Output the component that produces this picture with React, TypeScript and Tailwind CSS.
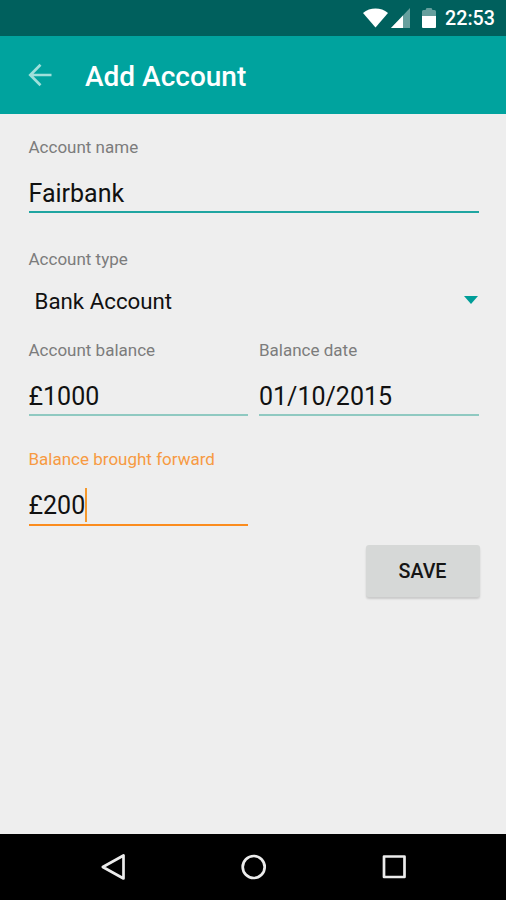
import { ReactNode } from 'react';

type FieldProps = {
  label: string;
  value: string;
  underline: string;
  labelColor?: string;
  children?: ReactNode;
};

function Field({ label, value, underline, labelColor = 'text-[#7c7c7c]', children }: FieldProps) {
  return (
    <div>
      <div className={`h-5 text-[17px] leading-5 ${labelColor}`}>{label}</div>
      <div className="mt-[18px] flex h-9 items-center text-[25px] leading-none text-[#111111]">
        <span className="pt-[1px]">{value}</span>
        {children}
      </div>
      <div className={underline} />
    </div>
  );
}

function StatusBar() {
  return (
    <div className="flex h-9 shrink-0 items-center justify-end bg-[#00605d] pr-[11px] text-white">
      <svg width="25" height="20" viewBox="0 0 25 20" fill="currentColor">
        <path d="M0 5C7-.9 18-.9 25 5L12.500 19.500Z" />
      </svg>
      <svg className="ml-[3px]" width="19" height="20" viewBox="0 0 19 20" fill="currentColor">
        <path d="M0 20 19 0v20Z" opacity=".4" />
        <path d="M0 20 12 7.400v12.600Z" />
      </svg>
      <svg className="ml-[12px]" width="14" height="20" viewBox="0 0 14 20" fill="currentColor">
        <path d="M0 8V3.500Q0 2 1.500 2H3.500L4.500 0h5l1 2h2Q14 2 14 3.500V8Z" opacity=".4" />
        <path d="M0 8h14v11q0 1-1 1H1q-1 0-1-1Z" />
      </svg>
      <span className="ml-[9px] pt-[2px] text-[19.7px] font-medium leading-none">22:53</span>
    </div>
  );
}

function Toolbar() {
  return (
    <div className="flex h-[78px] shrink-0 items-center bg-[#00a39e] pl-[28px]">
      <svg width="24" height="24" viewBox="0 0 24 24" fill="none" stroke="#9fe0db" strokeWidth="2.7">
        <path d="M23.500 12H2.500M12.500 1.800 2.300 12l10.200 10.200" />
      </svg>
      <h1 className="ml-[33px] pt-[3px] text-[28px] font-medium leading-none text-white">Add Account</h1>
    </div>
  );
}

function NavBar() {
  return (
    <div className="flex h-[66px] shrink-0 items-center justify-between bg-black pl-[100px] pr-[98px]">
      <svg width="28" height="28" viewBox="0 0 28 28" fill="none" stroke="#ececec" strokeWidth="2.700" strokeLinejoin="round">
        <path d="M23.500 2.500v23L2.800 14Z" />
      </svg>
      <svg width="28" height="28" viewBox="0 0 28 28" fill="none" stroke="#ececec" strokeWidth="2.700">
        <circle cx="13.700" cy="14" r="11" />
      </svg>
      <svg width="28" height="28" viewBox="0 0 28 28" fill="none" stroke="#ececec" strokeWidth="2.700" strokeLinejoin="round">
        <rect x="4" y="3.500" width="20.500" height="20.500" />
      </svg>
    </div>
  );
}

export default function App() {
  return (
    <div className="flex h-[900px] w-[506px] flex-col bg-[#eeeeee] font-['Roboto',sans-serif]">
      <StatusBar />
      <Toolbar />

      <main className="flex-1 pl-[28.5px] pr-[27.5px] pt-[23px]">
        <Field label="Account name" value="Fairbank" underline="h-[2px] bg-[#1fa5a1]" />

        <div className="mt-9">
          <div className="h-5 text-[17px] leading-5 text-[#7c7c7c]">Account type</div>
          <div className="mt-3 flex h-10 items-center justify-between pl-[6px] pr-[1px] text-[22.300px] leading-none text-[#111111]">
            <span>Bank Account</span>
            <svg className="-mt-[2px]" width="14" height="8" viewBox="0 0 14 8" fill="#009d98">
              <path d="M0 0h14L7 8Z" />
            </svg>
          </div>
        </div>

        <div className="mt-[19px] grid grid-cols-2 gap-[11px]">
          <Field label="Account balance" value="£1000" underline="h-[2px] bg-[#8fc9c1]" />
          <Field label="Balance date" value="01/10/2015" underline="h-[2px] bg-[#8fc9c1]" />
        </div>

        <div className="mt-[33px] grid grid-cols-2 gap-[11px]">
          <Field
            label="Balance brought forward"
            value="£200"
            labelColor="text-[#f79a42]"
            underline="mt-[1px] h-[2px] bg-[#fb8c1e]"
          >
            <div className="h-[34px] w-[2px] bg-[#f5992e]" />
          </Field>
        </div>

        <div className="mt-[19px] flex justify-end">
          <button className="-mr-[1px] h-[52px] w-[114px] rounded-[3px] bg-[#d6d8d7] pt-[2px] text-[19.700px] font-medium leading-none text-[#151515] shadow-[0_2px_2px_rgba(0,0,0,0.15)]">
            SAVE
          </button>
        </div>
      </main>

      <NavBar />
    </div>
  );
}
